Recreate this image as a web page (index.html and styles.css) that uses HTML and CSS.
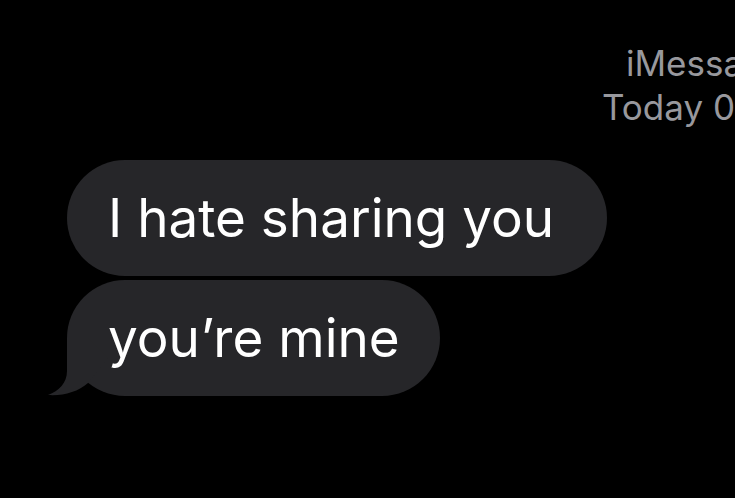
FILE: index.html
```html
<!DOCTYPE html>
<html lang="en">
<head>
    <meta charset="UTF-8">
    <meta name="viewport" content="width=device-width, initial-scale=1.0">
    <title>Messages</title>
    <link rel="stylesheet" href="styles.css">
</head>
<body>
    <div class="conversation">
        <div class="thread-meta">
            <div class="meta-service">iMessage</div>
            <div class="meta-time">Today 09:41</div>
        </div>

        <div class="thread">
            <div class="bubble bubble-wide">I hate sharing you</div>
            <div class="bubble bubble-last">
                you’re mine
                <svg class="bubble-tail" width="60" height="58" viewBox="0 0 60 58">
                    <path d="M19,0 L19,33 C19,45 11,53 0,57 C15,58 30,54 40,45 L60,20 L40,0 Z" fill="#262629"/>
                </svg>
            </div>
        </div>
    </div>
</body>
</html>
```

FILE: styles.css
```css
html, body {
    margin: 0;
    height: 100%;
    background-color: #000;
    overflow: hidden;
}

.conversation {
    font-family: Inter, "Liberation Sans", sans-serif;
    padding-top: 41px;
}

.thread-meta {
    display: inline-flex;
    flex-direction: column;
    align-items: center;
    margin-left: 602px;
    color: #98989d;
    font-size: 35px;
    line-height: 44px;
    white-space: nowrap;
}

.meta-service {
    padding-left: 6px;
}

.thread {
    display: flex;
    flex-direction: column;
    align-items: flex-start;
    gap: 4px;
    padding-left: 67px;
    margin-top: 31px;
}

.bubble {
    position: relative;
    height: 116px;
    line-height: 117px;
    padding: 0 40px 0 41px;
    border-radius: 58px;
    background-color: #262629;
    color: #fff;
    font-size: 53px;
    white-space: nowrap;
}

.bubble-wide {
    padding-right: 53px;
}

.bubble-tail {
    position: absolute;
    left: -19px;
    bottom: 0;
    display: block;
}
```
